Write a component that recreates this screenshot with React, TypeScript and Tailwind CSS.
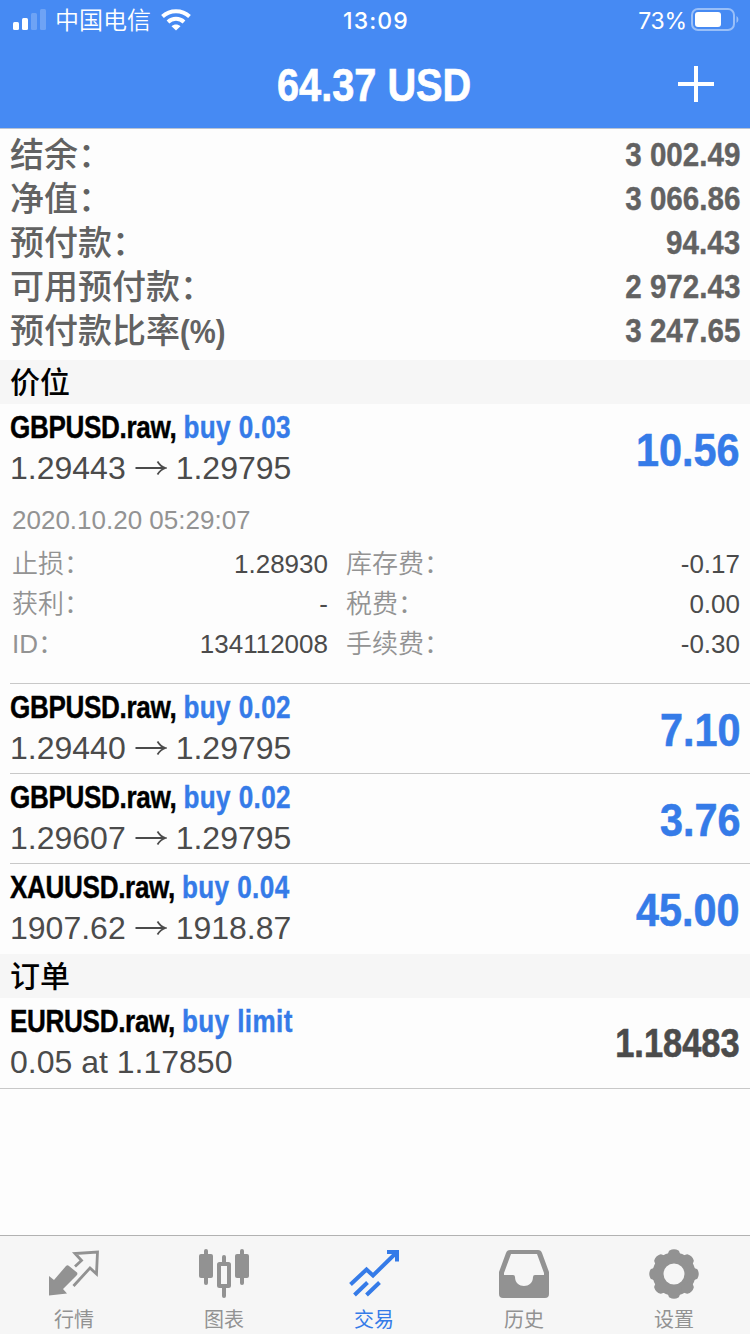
import React from 'react';

interface Deal {
  symbol: string;
  action: string;
  detail: React.ReactNode;
  value: string;
}

const Arrow = () => (
  <svg viewBox="0 0 32 20" className="w-8 h-5 mx-[9px]" fill="none" stroke="currentColor" strokeWidth="1.8">
    <path d="M0.5 10H30M22.5 3.5Q25.5 8.5 30.5 10Q25.5 11.5 22.5 16.5" />
  </svg>
);

const prices = (from: string, to: string) => (
  <>
    {from}
    <Arrow />
    {to}
  </>
);

const summary = [
  { label: '结余：', value: '3 002.49' },
  { label: '净值：', value: '3 066.86' },
  { label: '预付款：', value: '94.43' },
  { label: '可用预付款：', value: '2 972.43' },
  { label: '预付款比率', unit: '(%)', value: '3 247.65' },
];

const positions: Deal[] = [
  { symbol: 'GBPUSD.raw,', action: 'buy 0.03', detail: prices('1.29443', '1.29795'), value: '10.56' },
  { symbol: 'GBPUSD.raw,', action: 'buy 0.02', detail: prices('1.29440', '1.29795'), value: '7.10' },
  { symbol: 'GBPUSD.raw,', action: 'buy 0.02', detail: prices('1.29607', '1.29795'), value: '3.76' },
  { symbol: 'XAUUSD.raw,', action: 'buy 0.04', detail: prices('1907.62', '1918.87'), value: '45.00' },
];

const details = [
  ['止损：', '1.28930', '库存费：', '-0.17'],
  ['获利：', '-', '税费：', '0.00'],
  ['ID：', '134112008', '手续费：', '-0.30'],
];

const StatusBar = () => (
  <div className="flex items-center h-10 pl-[13px] pr-[11px] text-2xl font-['Inter','Noto_Sans_CJK_SC',sans-serif]">
    <div className="flex-1 flex items-center">
      <svg viewBox="0 0 34 22" className="w-[34px] h-[22px]" fill="white">
        <rect x="0" y="13" width="6" height="8" rx="1.5" />
        <rect x="9" y="9" width="6" height="12" rx="1.5" />
        <rect x="18" y="4" width="6" height="17" rx="1.5" opacity="0.22" />
        <rect x="27" y="0" width="6" height="21" rx="1.5" opacity="0.22" />
      </svg>
      <span className="ml-2 pt-0.5 font-[350]">中国电信</span>
      <svg viewBox="0 0 30 22" className="ml-2.5 w-[30px] h-[22px]" fill="none" stroke="white" strokeWidth="4">
        <path d="M1.5 7.5C9 0.5 21 0.5 28.5 7.5" />
        <path d="M7 13C11.5 8.8 18.5 8.8 23 13" />
        <path d="M15 21.5L10.5 17.2C13 14.8 17 14.8 19.5 17.2Z" fill="white" stroke="none" />
      </svg>
    </div>
    <span className="font-medium text-[23px] tracking-[1.1px] pt-0.5">13:09</span>
    <div className="flex-1 flex items-center justify-end">
      <span className="text-[23px] tracking-[-0.2px] pt-0.5">73%</span>
      <svg viewBox="0 0 48 24" className="ml-1 w-12 h-6" fill="none">
        <rect x="1" y="1" width="42" height="21" rx="6" stroke="white" strokeWidth="2" opacity="0.45" />
        <rect x="4" y="4" width="26" height="15" rx="3" fill="white" />
        <path d="M45.5 8C48 9.5 48 13.5 45.5 15Z" fill="white" opacity="0.45" />
      </svg>
    </div>
  </div>
);

const SectionTitle = ({ children }: { children: React.ReactNode }) => (
  <h2 className="h-11 px-2.5 pt-px bg-[#f6f6f6] text-black text-[30px] leading-[44px] font-medium">{children}</h2>
);

const DealRow = ({ deal, dark = false }: { deal: Deal; dark?: boolean }) => (
  <div className="flex items-center justify-between h-[89px]">
    <div>
      <div className="h-[45px] text-[32px] leading-[46px] font-bold whitespace-nowrap text-black origin-left scale-x-[0.815] [-webkit-text-stroke:0.4px]">
        <span className="tracking-[-0.4px]">{deal.symbol} </span>
        <span className="text-[#357be8] tracking-[0.5px]">{deal.action}</span>
      </div>
      <div className="h-11 flex items-center text-[32px] leading-[38px] pb-1.5 text-[#4b4b4b]">{deal.detail}</div>
    </div>
    <span
      className={
        dark
          ? 'text-[40px] font-bold origin-right scale-x-[0.86] text-[#4b4b4b] [-webkit-text-stroke:0.6px]'
          : 'text-[47px] font-bold origin-right scale-x-[0.88] text-[#357be8] pt-1 [-webkit-text-stroke:0.6px]'
      }
    >
      {deal.value}
    </span>
  </div>
);

const DealDetails = () => (
  <div className="h-[190px] pt-[5px] pl-0.5 text-[26px] text-[#939393]">
    <div className="h-[45px] leading-[44px]">2020.10.20 05:29:07</div>
    {details.map(([l1, v1, l2, v2]) => (
      <div key={l1} className="flex h-10 pt-px leading-10">
        <span className="font-[350]">{l1}</span>
        <span className="ml-auto text-[#4b4b4b]">{v1}</span>
        <div className="flex w-[412px] pl-[18px] justify-between">
          <span className="font-[350]">{l2}</span>
          <span className="text-[#4b4b4b]">{v2}</span>
        </div>
      </div>
    ))}
  </div>
);

const tabs = [
  {
    label: '行情',
    icon: (
      <>
        <path d="M0 27L5 31L17 17Q18.5 15.5 20 17L28 23.5Q29 25 27.5 26.5L14 40L18 44.5L0 46.5Z" fill="currentColor" />
        <path d="M26 17.5L32.5 11.5L26 4.5L48.5 3L47.5 25L41 19L24.5 37" fill="none" stroke="currentColor" strokeWidth="2.8" />
      </>
    ),
  },
  {
    label: '图表',
    icon: (
      <g fill="currentColor">
        <rect x="5" y="0" width="4" height="36" rx="2" />
        <rect x="0" y="5" width="14" height="24" rx="2" />
        <rect x="41" y="0" width="4" height="36" rx="2" />
        <rect x="36" y="5" width="14" height="24" rx="2" />
        <rect x="23" y="6" width="4" height="9" rx="2" />
        <rect x="23" y="36" width="4" height="13" rx="2" />
        <rect x="20" y="15" width="10" height="22" rx="0.5" fill="none" stroke="currentColor" strokeWidth="4" />
      </g>
    ),
  },
  {
    label: '交易',
    active: true,
    icon: (
      <path
        d="M1.5 35.5L17.5 20.5L24 26.5L47 4M38 3H48V12.5M5.5 46L18.5 33.5M17.5 46L30.5 33.5"
        fill="none"
        stroke="currentColor"
        strokeWidth="4"
      />
    ),
  },
  {
    label: '历史',
    icon: (
      <path
        fill="currentColor"
        fillRule="evenodd"
        d="M11 1H39Q42 1 43 4L50 23V45Q50 49 46 49H4Q0 49 0 45V23L7 4Q8 1 11 1ZM12 5L5 24V26H14Q16 26 16 28C16 40 34 40 34 28Q34 26 36 26H45V24L38 5Z"
      />
    ),
  },
  {
    label: '设置',
    icon: (
      <g fill="currentColor">
        <circle cx="25" cy="25" r="16" fill="none" stroke="currentColor" strokeWidth="11" />
        {[0, 45, 90, 135, 180, 225, 270, 315].map((angle) => (
          <path key={angle} d="M17 7C19.5 5.5 19 3 20.5 1.5Q25 -1 29.5 1.5C31 3 30.5 5.5 33 7L29 10H21Z" transform={`rotate(${angle} 25 25)`} />
        ))}
      </g>
    ),
  },
];

const TabBar = () => (
  <nav className="flex h-[99px] border-t border-[#b2b2b2] bg-[#f6f6f6]">
    {tabs.map(({ label, icon, active }) => (
      <div
        key={label}
        className={`flex-1 flex flex-col items-center pt-[13px] pr-0.5 ${active ? 'text-[#357be8]' : 'text-[#929292]'}`}
      >
        <svg viewBox="0 0 50 50" className="w-[50px] h-[50px]">
          {icon}
        </svg>
        <span className="mt-[7px] text-xl leading-7">{label}</span>
      </div>
    ))}
  </nav>
);

const App: React.FC = () => {
  return (
    <div className="w-[750px] h-[1334px] flex flex-col overflow-hidden bg-[#fdfdfd] font-['Liberation_Sans','Noto_Sans_CJK_SC',sans-serif]">
      <header className="h-[129px] bg-[#468af3] border-b border-[#b9c3d3] text-white">
        <StatusBar />
        <div className="grid grid-cols-[1fr_auto_1fr] items-center h-[88px]">
          <h1 className="col-start-2 text-[47px] font-bold scale-x-[0.845] pt-0.5 pr-0.5 [-webkit-text-stroke:0.7px]">64.37 USD</h1>
          <svg viewBox="0 0 36 36" className="justify-self-end mr-9 w-9 h-9" stroke="white" strokeWidth="4">
            <path d="M0 18H36M18 0V36" />
          </svg>
        </div>
      </header>

      <section className="h-[231px] pt-[3px] px-2.5 text-[34px] leading-[44px] text-[#626262]">
        {summary.map(({ label, unit, value }) => (
          <div key={label} className="flex justify-between h-11">
            <span className="flex font-medium pt-px">
              {label}
              {unit && <span className="font-bold origin-left scale-x-[0.86]">{unit}</span>}
            </span>
            <span className="font-bold origin-right scale-x-[0.87] [-webkit-text-stroke:0.4px]">{value}</span>
          </div>
        ))}
      </section>

      <SectionTitle>价位</SectionTitle>
      <section className="pl-2.5">
        {positions.map((deal, i) => (
          <div key={i} className="pr-2.5 border-b border-[#c8c8c8] last:border-transparent">
            <DealRow deal={deal} />
            {i === 0 && <DealDetails />}
          </div>
        ))}
      </section>

      <SectionTitle>订单</SectionTitle>
      <section className="px-2.5 pb-px border-b border-[#c8c8c8]">
        <DealRow dark deal={{ symbol: 'EURUSD.raw,', action: 'buy limit', detail: '0.05 at 1.17850', value: '1.18483' }} />
      </section>

      <div className="mt-auto">
        <TabBar />
      </div>
    </div>
  );
};

export default App;
